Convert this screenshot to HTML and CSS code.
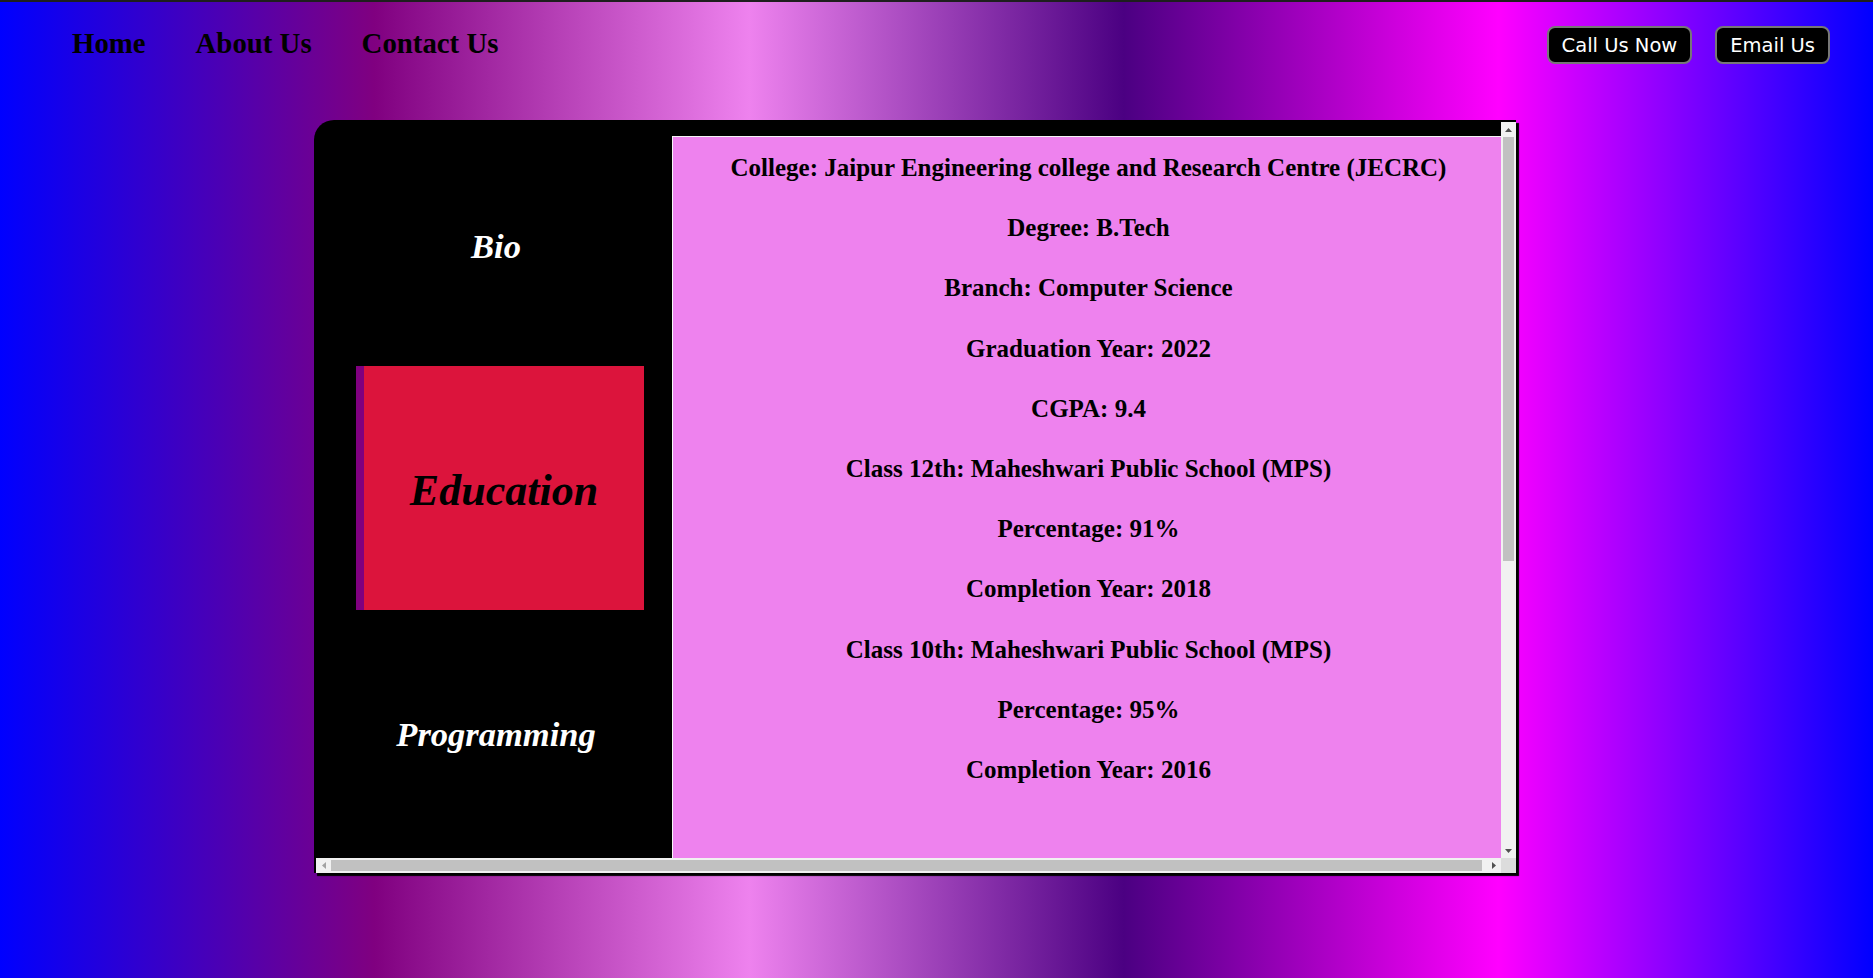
FILE: index.html
```html
<!DOCTYPE html>
<html lang="en">
<head>
<meta charset="utf-8">
<title>Education</title>
<link rel="stylesheet" href="styles.css">
</head>
<body>
<div class="topline"></div>
<header class="nav">
  <nav class="links">
    <a href="#">Home</a>
    <a href="#">About Us</a>
    <a href="#">Contact Us</a>
  </nav>
  <div class="actions">
    <button class="btn">Call Us Now</button>
    <button class="btn">Email Us</button>
  </div>
</header>
<main class="card">
  <div class="viewport">
    <div class="inner">
      <aside class="side">
        <div class="tab">Bio</div>
        <div class="tab active">Education</div>
        <div class="tab">Programming</div>
      </aside>
      <section class="info">
        <p>College: Jaipur Engineering college and Research Centre (JECRC)</p>
        <p>Degree: B.Tech</p>
        <p>Branch: Computer Science</p>
        <p>Graduation Year: 2022</p>
        <p>CGPA: 9.4</p>
        <p>Class 12th: Maheshwari Public School (MPS)</p>
        <p>Percentage: 91%</p>
        <p>Completion Year: 2018</p>
        <p>Class 10th: Maheshwari Public School (MPS)</p>
        <p>Percentage: 95%</p>
        <p>Completion Year: 2016</p>
      </section>
    </div>
  </div>
  <div class="vbar">
    <div class="arrow"><svg width="7" height="4" viewBox="0 0 7 4"><polygon points="3.5,0 7,4 0,4" fill="#505050"/></svg></div>
    <div class="vthumb"></div>
    <div class="fill"></div>
    <div class="arrow"><svg width="7" height="4" viewBox="0 0 7 4"><polygon points="0,0 7,0 3.5,4" fill="#505050"/></svg></div>
  </div>
  <div class="hbar">
    <div class="arrow"><svg width="4" height="7" viewBox="0 0 4 7"><polygon points="4,0 4,7 0,3.5" fill="#a3a3a3"/></svg></div>
    <div class="hthumb"></div>
    <div class="fill"></div>
    <div class="arrow"><svg width="4" height="7" viewBox="0 0 4 7"><polygon points="0,0 4,3.5 0,7" fill="#505050"/></svg></div>
  </div>
  <div class="corner"></div>
</main>
</body>
</html>
```
FILE: styles.css
```css
html, body {
  margin: 0;
  padding: 0;
}
body {
  min-height: 978px;
  background: linear-gradient(to right, #0000ff 0%, #800080 20%, #ee82ee 40%, #4b0082 60%, #ff00ff 80%, #0000ff 100%);
  font-family: "Liberation Serif", "Times New Roman", serif;
  overflow: hidden;
}
.topline {
  height: 2px;
  background: #1e1e1e;
}
.nav {
  height: 90px;
  display: flex;
  align-items: center;
  justify-content: space-between;
  padding: 0 43px 0 72px;
  margin-bottom: 28px;
}
.links {
  display: flex;
  gap: 50px;
  margin-top: -7px;
}
.links a {
  color: #000;
  text-decoration: none;
  font-weight: bold;
  font-size: 28.8px;
}
.actions {
  display: flex;
  gap: 23px;
  margin-top: -4px;
}
.btn {
  height: 38px;
  padding: 0 13px;
  background: #000;
  color: #fff;
  border: 2px solid #777;
  border-radius: 8px;
  font-family: "Comic Sans MS", "DejaVu Sans", sans-serif;
  font-size: 19.5px;
  cursor: pointer;
}
.card {
  margin-left: 314px;
  width: 1202px;
  height: 753px;
  box-sizing: border-box;
  background: #000;
  border-top: 2px solid #000;
  border-left: 2px solid #000;
  border-top-left-radius: 20px;
  box-shadow: 3px 3px 1px #000;
  display: grid;
  grid-template-columns: 1185px 15px;
  grid-template-rows: 736px 15px;
}
.viewport {
  overflow: hidden;
  border-top-left-radius: 18px;
}
.inner {
  display: flex;
  width: 1188px;
}
.side {
  width: 356px;
  flex: none;
  display: flex;
  flex-direction: column;
}
.tab {
  height: 244px;
  width: 288px;
  margin-left: 36px;
  box-sizing: border-box;
  display: flex;
  align-items: center;
  justify-content: center;
  padding-top: 4px;
  color: #fff;
  font-weight: bold;
  font-style: italic;
  font-size: 34.5px;
}
.tab.active {
  margin-left: 40px;
  background: #dc143c;
  border-left: 8px solid #800080;
  color: #000;
  font-size: 44px;
}
.info {
  flex: none;
  width: 832px;
  height: 1211px;
  box-sizing: border-box;
  margin-top: 14px;
  background: #ee82ee;
  border-top: 1px solid #f4f4f4;
  border-left: 1px solid #f4f4f4;
  display: flex;
  flex-direction: column;
  align-items: center;
  gap: 32px;
  padding: 17px 0 0 0;
}
.info p {
  margin: 0;
  font-weight: bold;
  font-size: 25px;
  line-height: 28.2px;
  color: #000;
  text-align: center;
}
.vbar {
  background: #f1f1f1;
  display: flex;
  flex-direction: column;
}
.hbar {
  background: #f1f1f1;
  display: flex;
}
.arrow {
  width: 15px;
  height: 15px;
  flex: none;
  display: flex;
  align-items: center;
  justify-content: center;
}
.fill {
  flex: 1;
}
.vthumb {
  height: 424px;
  margin: 0 2px;
  background: #c1c1c1;
}
.hthumb {
  width: 1151px;
  margin: 2px 0;
  background: #c1c1c1;
}
.corner {
  background: #dcdcdc;
}
```
